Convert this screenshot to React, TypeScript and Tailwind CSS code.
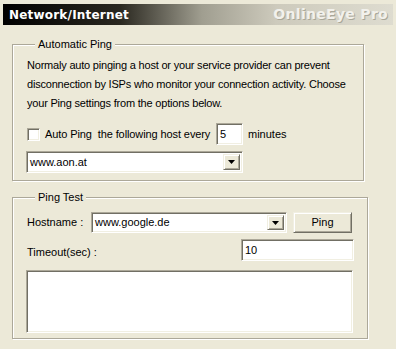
import React from 'react';

const sunken =
  'border border-t-[#aca899] border-l-[#aca899] border-b-white border-r-white shadow-[inset_1px_1px_0_#716f64,inset_-1px_-1px_0_#f1efe2] bg-white';
const raised =
  'border border-t-[#f1efe2] border-l-[#f1efe2] border-b-[#716f64] border-r-[#716f64] shadow-[inset_1px_1px_0_#fff,inset_-1px_-1px_0_#aca899] bg-[#ece9d8]';

const Combo: React.FC<{ value: string; className: string }> = ({ value, className }) => (
  <div className={`${sunken} flex items-stretch p-[2px] ${className}`}>
    <div className="flex-1 flex items-center pl-[1px] leading-none">{value}</div>
    <div className={`${raised} w-[17px] flex items-center justify-center`}>
      <svg width="7" height="4" viewBox="0 0 7 4">
        <path d="M0 0h7L3.5 4z" fill="#000" />
      </svg>
    </div>
  </div>
);

const App: React.FC = () => {
  return (
    <div
      className="w-[396px] h-[349px] bg-[#ece9d8] text-[11px] text-black overflow-hidden"
      style={{ fontFamily: '"Liberation Sans", Arial, sans-serif' }}
    >
      {/* Title bar */}
      <div className="mx-[3px] mt-[4px] h-[21px] flex items-center justify-between bg-[linear-gradient(to_right,#000_0%,#2a2820_30%,#a09e90_51%,#cdcabc_70%,#dedcd0_100%)]">
        <span
          className="pl-[6px] text-white font-bold text-[12px] tracking-[0.2px]"
          style={{ fontFamily: '"DejaVu Sans", Verdana, sans-serif' }}
        >
          Network/Internet
        </span>
        <span
          className="pr-[5px] text-[#f2f1ec] font-bold text-[14px] tracking-[0.3px] [text-shadow:1px_1px_0_#a9a799]"
          style={{ fontFamily: '"DejaVu Sans", Verdana, sans-serif' }}
        >
          OnlineEye Pro
        </span>
      </div>

      {/* Automatic Ping */}
      <fieldset className="ml-[12px] mt-[12px] w-[352px] h-[144px] border border-[#aca899] shadow-[1px_1px_0_#fff,inset_1px_1px_0_#fff] px-[14px]">
        <legend className="ml-[8px] px-[3px] bg-[#ece9d8] leading-[14px]">Automatic Ping</legend>
        <p className="mt-[5px] leading-[19px] tracking-[-0.2px]">
          Normaly auto pinging a host or your service provider can prevent
          <br />
          disconnection by ISPs who monitor your connection activity. Choose
          <br />
          your Ping settings from the options below.
        </p>
        <div className="mt-[10px] flex items-center h-[22px]">
          <div className={`${sunken} w-[13px] h-[13px]`} />
          <span className="ml-[5px] w-[167px] tracking-[-0.1px]">Auto Ping&nbsp; the following host every</span>
          <div className={`${sunken} ml-[4px] w-[27px] h-[22px] flex items-center pl-[3px]`}>5</div>
          <span className="ml-[5px]">minutes</span>
        </div>
        <Combo value="www.aon.at" className="mt-[6px] -ml-[1px] w-[217px] h-[22px]" />
      </fieldset>

      {/* Ping Test */}
      <fieldset className="ml-[12px] mt-[9px] w-[352px] h-[149px] border border-[#aca899] shadow-[1px_1px_0_#fff,inset_1px_1px_0_#fff] px-[14px]">
        <legend className="ml-[8px] px-[3px] bg-[#ece9d8] leading-[14px]">Ping Test</legend>
        <div className="mt-[8px] flex items-center h-[21px]">
          <span className="w-[64px]">Hostname :</span>
          <Combo value="www.google.de" className="w-[196px] h-[21px]" />
          <button className={`${raised} ml-[6px] w-[59px] h-[21px] text-[11px]`}>Ping</button>
        </div>
        <div className="mt-[6px] flex items-center h-[22px]">
          <span className="mt-[4px]">Timeout(sec) :</span>
          <div className={`${sunken} ml-auto mr-[-1px] w-[113px] h-[22px] flex items-center pl-[3px]`}>10</div>
        </div>
        <div className={`${sunken} mt-[9px] -ml-[1px] w-[327px] h-[63px]`} />
      </fieldset>
    </div>
  );
};

export default App;
